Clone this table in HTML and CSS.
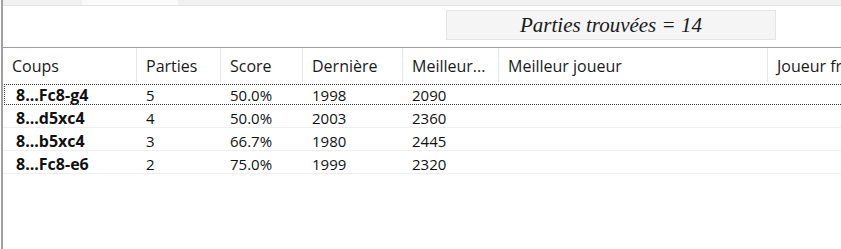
FILE: index.html
```html
<!DOCTYPE html>
<html lang="fr">
<head>
<meta charset="utf-8">
<title>Arbre</title>
<link rel="stylesheet" href="styles.css">
</head>
<body>
<div class="panel">
  <div class="tabstrip"><span class="tab-a"></span><span class="tab-b"></span><span class="tab-c"></span></div>
  <div class="toolbar">
    <div class="found">Parties trouvées = 14</div>
  </div>
  <div class="list">
    <div class="row head">
      <div class="cell">Coups</div>
      <div class="cell">Parties</div>
      <div class="cell">Score</div>
      <div class="cell">Dernière</div>
      <div class="cell">Meilleur...</div>
      <div class="cell">Meilleur joueur</div>
      <div class="cell">Joueur fréquent</div>
    </div>
    <div class="row item focus">
      <div class="cell move">8...Fc8-g4</div><div class="cell">5</div><div class="cell">50.0%</div><div class="cell">1998</div><div class="cell">2090</div><div class="cell"></div><div class="cell"></div>
    </div>
    <div class="row item">
      <div class="cell move">8...d5xc4</div><div class="cell">4</div><div class="cell">50.0%</div><div class="cell">2003</div><div class="cell">2360</div><div class="cell"></div><div class="cell"></div>
    </div>
    <div class="row item">
      <div class="cell move">8...b5xc4</div><div class="cell">3</div><div class="cell">66.7%</div><div class="cell">1980</div><div class="cell">2445</div><div class="cell"></div><div class="cell"></div>
    </div>
    <div class="row item">
      <div class="cell move">8...Fc8-e6</div><div class="cell">2</div><div class="cell">75.0%</div><div class="cell">1999</div><div class="cell">2320</div><div class="cell"></div><div class="cell"></div>
    </div>
  </div>
</div>
</body>
</html>
```
FILE: styles.css
```css
html, body {
  margin: 0;
  padding: 0;
  background: #ffffff;
  overflow: hidden;
}
body {
  width: 841px;
  height: 249px;
}
.panel {
  margin-left: 1px;
  border-left: 2px solid #a0a0a0;
  height: 249px;
  box-sizing: border-box;
  font-family: "Open Sans", "Noto Sans", sans-serif;
  color: #111;
}
.tabstrip {
  display: flex;
  height: 5px;
  background: #f0f0f0;
  border-bottom: 1px solid #e3e3e3;
}
.tab-a { width: 79px; }
.tab-b { width: 96px; background: #fafafa; }
.tab-c { flex: 1; }
.toolbar {
  height: 41px;
  display: flex;
  align-items: flex-start;
  padding-left: 443px;
  box-sizing: border-box;
  padding-top: 4px;
}
.found {
  width: 330px;
  height: 30px;
  box-sizing: border-box;
  background: #f5f5f5;
  border: 1px solid #e4e4e4;
  font-family: "Liberation Serif", "Times New Roman", serif;
  font-style: italic;
  font-size: 21px;
  line-height: 28px;
  text-align: center;
  color: #1a1a1a;
}
.list {
  border-top: 1px solid #a0a0a0;
}
.row {
  display: grid;
  grid-template-columns: 134px 84px 82px 100px 96px 269px 1fr;
  white-space: nowrap;
  overflow: hidden;
}
.head {
  height: 34px;
}
.head .cell {
  font-size: 16px;
  line-height: 31px;
  padding-top: 3px;
  padding-left: 9px;
  border-right: 1px solid #e5e5e5;
  overflow: hidden;
  color: #1a1a1a;
}
.head .cell:last-child { border-right: 0; }
.item {
  position: relative;
  height: 23px;
  box-sizing: border-box;
  border-bottom: 1px solid #efefef;
  font-size: 15px;
  line-height: 20px;
}
.item .cell {
  padding-top: 3px;
  padding-left: 9px;
}
.item .cell.move {
  font-weight: 700;
  font-size: 16px;
  padding-left: 13px;
}
.item.focus {
  border-bottom: 0;
}
.item.focus::after {
  content: "";
  position: absolute;
  left: 1px;
  right: -2px;
  top: 2px;
  bottom: 0;
  border: 1px dotted #333;
  pointer-events: none;
}
```
